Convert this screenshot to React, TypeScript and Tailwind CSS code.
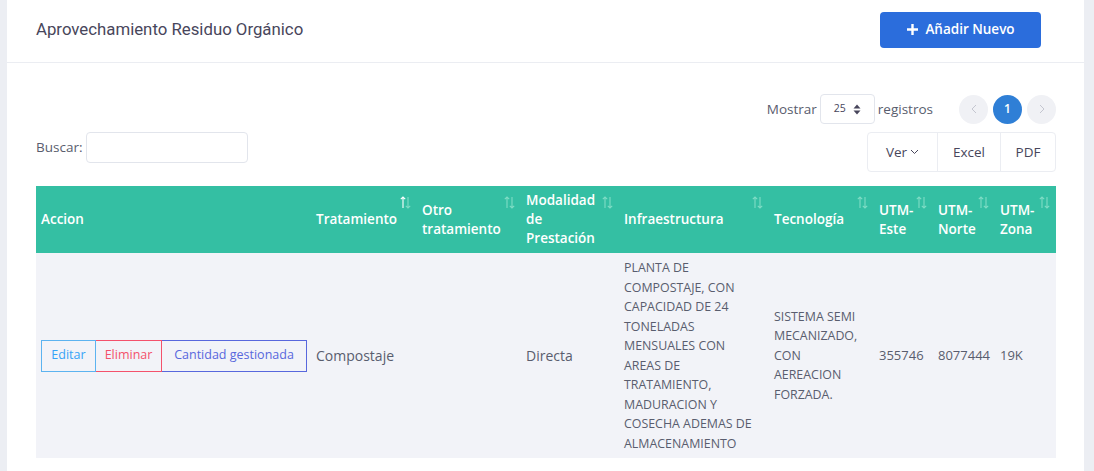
import React from 'react';

const font = { fontFamily: '"Open Sans", "Noto Sans", sans-serif' };

function SortIcon({ active = false }: { active?: boolean }) {
  return (
    <svg width="11" height="13" viewBox="0 0 11 13" className="absolute right-[6px] top-[10px]">
      <path d="M3 12V1M0.8 3.2L3 1l2.2 2.2" fill="none" stroke={active ? '#ffffff' : '#7fdcc5'} strokeWidth="1.1" />
      <path d="M8 1v11M5.8 9.8L8 12l2.2-2.2" fill="none" stroke="#7fdcc5" strokeWidth="1.1" />
    </svg>
  );
}

const columns = [
  { label: 'Accion', w: 'w-[275px]', sort: false },
  { label: 'Tratamiento', w: 'w-[106px]', sort: true, active: true, right: true },
  { label: 'Otro tratamiento', w: 'w-[104px]', sort: true },
  { label: 'Modalidad de Prestación', w: 'w-[98px]', sort: true },
  { label: 'Infraestructura', w: 'w-[150px]', sort: true },
  { label: 'Tecnología', w: 'w-[105px]', sort: true },
  { label: 'UTM-Este', w: 'w-[59px]', sort: true },
  { label: 'UTM-Norte', w: 'w-[62px]', sort: true },
  { label: 'UTM-Zona', w: 'w-[61px]', sort: true },
];

const infra = [
  'PLANTA DE',
  'COMPOSTAJE, CON',
  'CAPACIDAD DE 24',
  'TONELADAS',
  'MENSUALES CON',
  'AREAS DE',
  'TRATAMIENTO,',
  'MADURACION Y',
  'COSECHA ADEMAS DE',
  'ALMACENAMIENTO',
];

const tecno = ['SISTEMA SEMI', 'MECANIZADO,', 'CON', 'AEREACION', 'FORZADA.'];

export default function App() {
  return (
    <div className="min-h-[471px] bg-[#eceef3] pl-[7px] pr-[10px]" style={font}>
      <div className="bg-white">
        <div className="flex h-[63px] items-center justify-between border-b border-[#ebedf2] pb-[3px] pl-[29px] pr-[43px]">
          <h3 className="text-[16.8px] text-[#48465b]" style={{ fontFamily: 'Roboto, sans-serif' }}>
            Aprovechamiento Residuo Orgánico
          </h3>
          <button className="flex h-[36px] w-[161px] items-center justify-center gap-[6px] rounded-[4px] bg-[#2b6ddc] text-[13.5px] font-semibold text-white">
            <svg width="13" height="13" viewBox="0 0 13 13">
              <path d="M6.5 1v11M1 6.5h11" stroke="#fff" strokeWidth="2.4" />
            </svg>
            Añadir Nuevo
          </button>
        </div>

        <div className="pb-[14px] pl-[29px] pr-[28px] pt-[31px]">
          <div className="flex items-center justify-end gap-[3px] text-[13.5px] text-[#595d6e]">
            <span>Mostrar</span>
            <div className="flex h-[30px] w-[55px] items-center justify-center gap-[7px] rounded-[4px] border border-[#e2e5ec] text-[10.5px] text-[#48465b]">
              25
              <svg width="8" height="11" viewBox="0 0 8 11">
                <path d="M4 0.5L7.5 4.5H0.5Z M4 10.5L7.5 6.5H0.5Z" fill="#48465b" />
              </svg>
            </div>
            <span>registros</span>
            <div className="ml-[23px] flex items-center gap-[5px]">
              <div className="flex h-[29px] w-[29px] items-center justify-center rounded-full bg-[#f0f1f5]">
                <svg width="6" height="10" viewBox="0 0 6 10"><path d="M5 1L1 5l4 4" fill="none" stroke="#c4c6d0" strokeWidth="1" /></svg>
              </div>
              <div className="flex h-[29px] w-[29px] items-center justify-center rounded-full bg-[#2f7fd6] text-[12px] font-semibold text-white">1</div>
              <div className="flex h-[29px] w-[29px] items-center justify-center rounded-full bg-[#f0f1f5]">
                <svg width="6" height="10" viewBox="0 0 6 10"><path d="M1 1l4 4-4 4" fill="none" stroke="#c4c6d0" strokeWidth="1" /></svg>
              </div>
            </div>
          </div>

          <div className="mt-[8px] flex items-start justify-between">
            <div className="flex items-center gap-[4px] text-[13.5px] text-[#595d6e]">
              <span>Buscar:</span>
              <div className="h-[31px] w-[162px] rounded-[4px] border border-[#e2e5ec]" />
            </div>
            <div className="flex h-[40px] rounded-[4px] border border-[#ebedf2] text-[13.5px] text-[#48465b]">
              <div className="flex w-[70px] items-center justify-center gap-[3px] border-r border-[#ebedf2]">
                Ver
                <svg width="9" height="6" viewBox="0 0 9 6"><path d="M1 1l3.5 3.5L8 1" fill="none" stroke="#48465b" strokeWidth="1" /></svg>
              </div>
              <div className="flex w-[63px] items-center justify-center border-r border-[#ebedf2]">Excel</div>
              <div className="flex w-[54px] items-center justify-center">PDF</div>
            </div>
          </div>

          <table className="mt-[14px] w-full table-fixed border-collapse">
            <thead>
              <tr className="h-[67px] bg-[#34bfa3] text-left text-[13.5px] font-semibold leading-[19px] text-white">
                {columns.map((c) => (
                  <th
                    key={c.label}
                    className={`${c.w} relative py-[5px] pl-[5px] align-middle font-semibold ${c.right ? 'pr-[20px] text-right' : 'pr-[16px]'}`}
                  >
                    {c.label}
                    {c.sort && <SortIcon active={c.active} />}
                  </th>
                ))}
              </tr>
            </thead>
            <tbody>
              <tr className="bg-[#f2f3f8] text-[14px] text-[#595d6e]">
                <td className="py-[5px] pl-[5px] align-middle">
                  <div className="flex h-[32px] text-[12.5px]">
                    <span className="flex w-[55px] items-center justify-center border border-[#5cb3f0] text-[#36a3f7]">Editar</span>
                    <span className="flex w-[66px] items-center justify-center border border-l-0 border-[#f4516c] text-[#f4516c]">Eliminar</span>
                    <span className="flex w-[145px] items-center justify-center border border-l-0 border-[#5867dd] text-[#5867dd]">Cantidad gestionada</span>
                  </div>
                </td>
                <td className="pl-[5px] align-middle">Compostaje</td>
                <td className="pl-[5px] align-middle"></td>
                <td className="pl-[5px] align-middle">Directa</td>
                <td className="py-[5px] pl-[5px] align-middle text-[12.4px] leading-[19.5px]">
                  {infra.map((l) => (
                    <div key={l} className="whitespace-nowrap">{l}</div>
                  ))}
                </td>
                <td className="py-[5px] pl-[5px] align-middle text-[12.4px] leading-[19.5px]">
                  {tecno.map((l) => (
                    <div key={l} className="whitespace-nowrap">{l}</div>
                  ))}
                </td>
                <td className="pl-[5px] align-middle text-[13px]">355746</td>
                <td className="pl-[5px] align-middle text-[13px]">8077444</td>
                <td className="pl-[5px] align-middle text-[13px]">19K</td>
              </tr>
            </tbody>
          </table>
        </div>
      </div>
    </div>
  );
}
